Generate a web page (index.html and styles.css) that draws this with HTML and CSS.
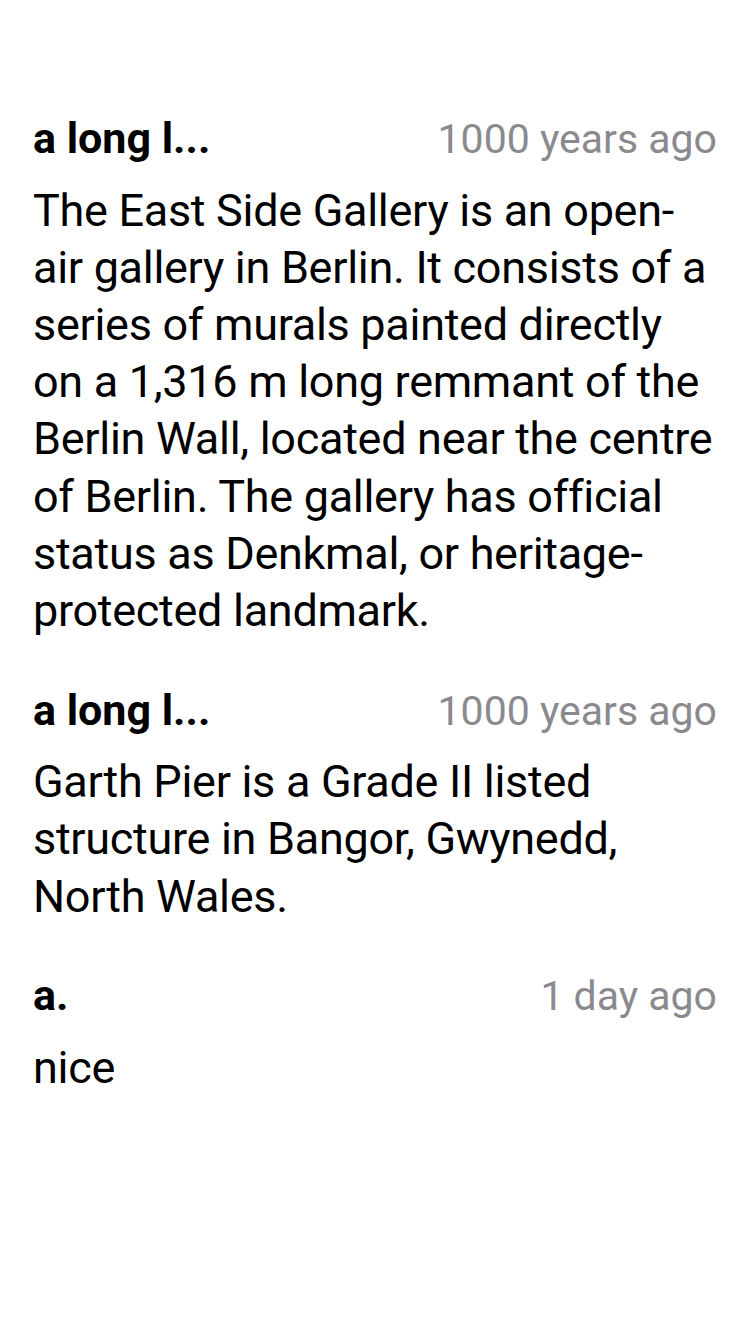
FILE: index.html
```html
<!DOCTYPE html>
<html lang="en">
<head>
<meta charset="utf-8">
<title>Comments</title>
<link rel="stylesheet" href="styles.css">
</head>
<body>
<main class="list">
  <article class="comment">
    <header class="comment-head">
      <span class="author">a long l...</span>
      <span class="time">1000 years ago</span>
    </header>
    <p class="body">The East Side Gallery is an open-air gallery in Berlin. It consists of a series of murals painted directly on a 1,316 m long remmant of the Berlin Wall, located near the centre of Berlin. The gallery has official status as Denkmal, or heritage-protected landmark.</p>
  </article>
  <article class="comment">
    <header class="comment-head">
      <span class="author">a long l...</span>
      <span class="time">1000 years ago</span>
    </header>
    <p class="body">Garth Pier is a Grade II listed structure in Bangor, Gwynedd, North Wales.</p>
  </article>
  <article class="comment">
    <header class="comment-head">
      <span class="author">a.</span>
      <span class="time">1 day ago</span>
    </header>
    <p class="body">nice</p>
  </article>
</main>
</body>
</html>
```

FILE: styles.css
```css
html, body {
  margin: 0;
  padding: 0;
  background: #ffffff;
}

body {
  width: 750px;
  min-height: 1334px;
  font-family: Roboto, "Noto Sans", sans-serif;
  color: #000000;
}

.list {
  display: flex;
  flex-direction: column;
  gap: 47.5px;
  padding: 115px 33px 0 33px;
}

.comment {
  display: flex;
  flex-direction: column;
  gap: 20.5px;
}

.comment-head {
  display: flex;
  justify-content: space-between;
  align-items: baseline;
  height: 46px;
  line-height: 46px;
}

.author {
  font-size: 43px;
  font-weight: 700;
  letter-spacing: 0;
}

.time {
  font-size: 41px;
  color: #8a8a8e;
  font-weight: 400;
  letter-spacing: 0;
}

.body {
  margin: 0;
  font-size: 45px;
  line-height: 57.2px;
  letter-spacing: -0.3px;
}
```
